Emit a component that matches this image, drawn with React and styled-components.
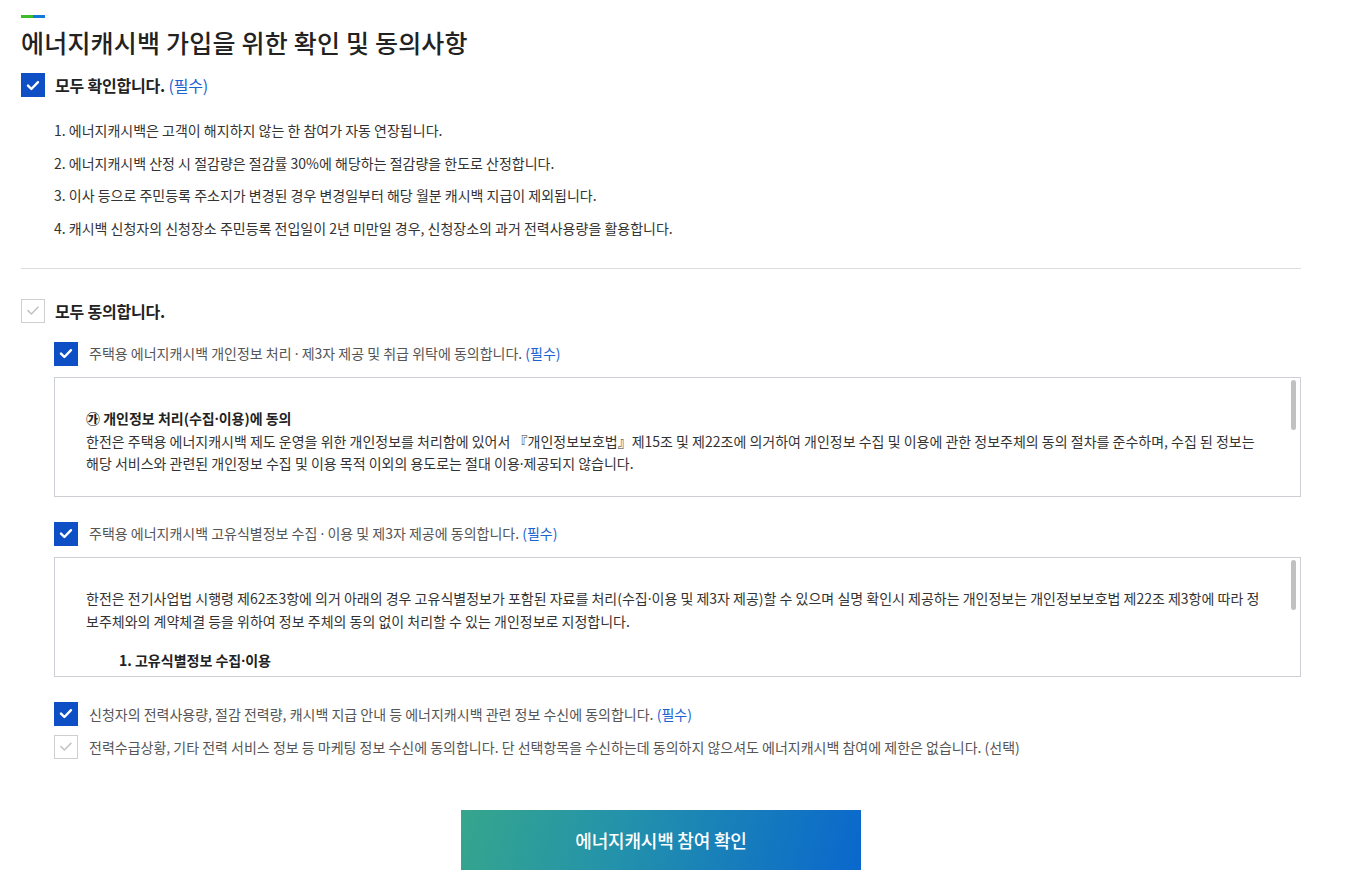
import React from 'react';
import styled, { createGlobalStyle } from 'styled-components';

const GlobalStyle = createGlobalStyle`
  body {
    margin: 0;
    background: #fff;
    font-family: "Noto Sans CJK KR", "Noto Sans", sans-serif;
    color: #333;
  }
`;

const Page = styled.div`
  width: 1280px;
  padding: 15px 0 17px 21px;
`;

const TitleBar = styled.div`
  display: flex;
  width: 24px;
  height: 3px;
  span:first-child { flex: 1; background: #3dbb2a; }
  span:last-child { flex: 1; background: #1379d8; }
`;

const Title = styled.h2`
  margin: 4px 0 0;
  font-size: 25px;
  line-height: 40px;
  font-weight: 500;
  color: #222;
  letter-spacing: 0.2px;
`;

const CheckRow = styled.label`
  display: flex;
  align-items: center;
  gap: ${p => (p.$sub ? '11px' : '10px')};
  margin: ${p => p.$margin || '0'};
  padding-left: ${p => (p.$sub ? '33px' : '0')};
`;

const Box = styled.span`
  flex: none;
  display: flex;
  align-items: center;
  justify-content: center;
  width: 24px;
  height: 24px;
  box-sizing: border-box;
  background: ${p => (p.$on ? '#0f4fc6' : '#fff')};
  border: 1px solid ${p => (p.$on ? '#0f4fc6' : '#cfcfcf')};
`;

const MainLabel = styled.span`
  font-size: 16px;
  line-height: 24px;
  font-weight: 700;
  color: #222;
  letter-spacing: -0.2px;
`;

const SubLabel = styled.span`
  font-size: 14px;
  line-height: 22px;
  color: #555;
`;

const Required = styled.span`
  color: #1a63d0;
  font-weight: 400;
`;

const Dot = styled.span`
  font-family: "Noto Sans", sans-serif;
`;

const Notes = styled.ol`
  list-style: none;
  margin: 22px 0 0;
  padding: 0 0 0 33px;
  display: flex;
  flex-direction: column;
  gap: 10.5px;
  li {
    font-size: 14px;
    line-height: 22px;
    color: #333;
  }
`;

const Divider = styled.hr`
  margin: 29px 0 0;
  border: 0;
  border-top: 1px solid #ddd;
`;

const TermsBox = styled.div`
  position: relative;
  margin: 11px 0 0 33px;
  height: 120px;
  box-sizing: border-box;
  border: 1px solid #ccd0d4;
  overflow: hidden;
`;

const TermsText = styled.div`
  padding: 29px 40px 0 31px;
  font-size: 14px;
  line-height: 22px;
  color: #333;
  p { margin: 0; }
  strong { font-weight: 700; color: #222; }
  .gap { height: 17px; }
  .indent { padding-left: 33px; }
`;

const Scrollbar = styled.div`
  position: absolute;
  top: 2px;
  right: 4px;
  width: 5px;
  height: 50px;
  border-radius: 3px;
  background: #c1c1c1;
`;

const ButtonWrap = styled.div`
  display: flex;
  justify-content: center;
  margin-top: 51px;
`;

const Submit = styled.button`
  width: 400px;
  height: 60px;
  border: 0;
  color: #fff;
  font-family: inherit;
  font-size: 18px;
  font-weight: 500;
  letter-spacing: -0.2px;
  background: linear-gradient(105deg, #36a68d 0%, #2392ab 40%, #0a67cd 100%);
  cursor: pointer;
`;

function Check({ on }) {
  return (
    <Box $on={on}>
      <svg width="14" height="11" viewBox="0 0 14 11" fill="none">
        <path
          d="M2 5.6 L5.4 9 L12 2.2"
          stroke={on ? '#fff' : '#c4c4c4'}
          strokeWidth={on ? 2.4 : 1.6}
          strokeLinecap="round"
          strokeLinejoin="round"
        />
      </svg>
    </Box>
  );
}

const notes = [
  '1. 에너지캐시백은 고객이 해지하지 않는 한 참여가 자동 연장됩니다.',
  '2. 에너지캐시백 산정 시 절감량은 절감률 30%에 해당하는 절감량을 한도로 산정합니다.',
  '3. 이사 등으로 주민등록 주소지가 변경된 경우 변경일부터 해당 월분 캐시백 지급이 제외됩니다.',
  '4. 캐시백 신청자의 신청장소 주민등록 전입일이 2년 미만일 경우, 신청장소의 과거 전력사용량을 활용합니다.',
];

export default function App() {
  return (
    <Page>
      <GlobalStyle />
      <TitleBar><span /><span /></TitleBar>
      <Title>에너지캐시백 가입을 위한 확인 및 동의사항</Title>

      <CheckRow $margin="11px 0 0">
        <Check on />
        <MainLabel>모두 확인합니다. <Required>(필수)</Required></MainLabel>
      </CheckRow>
      <Notes>
        {notes.map(n => <li key={n}>{n}</li>)}
      </Notes>

      <Divider />

      <CheckRow $margin="30px 0 0">
        <Check />
        <MainLabel>모두 동의합니다.</MainLabel>
      </CheckRow>

      <CheckRow $sub $margin="19px 0 0">
        <Check on />
        <SubLabel>주택용 에너지캐시백 개인정보 처리 <Dot>·</Dot> 제3자 제공 및 취급 위탁에 동의합니다. <Required>(필수)</Required></SubLabel>
      </CheckRow>
      <TermsBox>
        <TermsText>
          <p><strong>㉮ 개인정보 처리(수집<Dot>·</Dot>이용)에 동의</strong></p>
          <p>
            한전은 주택용 에너지캐시백 제도 운영을 위한 개인정보를 처리함에 있어서 『개인정보보호법』제15조 및 제22조에 의거하여 개인정보 수집 및 이용에 관한 정보주체의 동의 절차를 준수하며, 수집 된 정보는
            <br />
            해당 서비스와 관련된 개인정보 수집 및 이용 목적 이외의 용도로는 절대 이용<Dot>·</Dot>제공되지 않습니다.
          </p>
          <div className="gap" />
          <p className="indent">- 수집<Dot>·</Dot>이용 목적 : 에너지캐시백 참여 신청</p>
        </TermsText>
        <Scrollbar />
      </TermsBox>

      <CheckRow $sub $margin="25px 0 0">
        <Check on />
        <SubLabel>주택용 에너지캐시백 고유식별정보 수집 <Dot>·</Dot> 이용 및 제3자 제공에 동의합니다. <Required>(필수)</Required></SubLabel>
      </CheckRow>
      <TermsBox>
        <TermsText>
          <p>
            한전은 전기사업법 시행령 제62조3항에 의거 아래의 경우 고유식별정보가 포함된 자료를 처리(수집<Dot>·</Dot>이용 및 제3자 제공)할 수 있으며 실명 확인시 제공하는 개인정보는 개인정보보호법 제22조 제3항에 따라 정
            <br />
            보주체와의 계약체결 등을 위하여 정보 주체의 동의 없이 처리할 수 있는 개인정보로 지정합니다.
          </p>
          <div className="gap" />
          <p className="indent"><strong>1. 고유식별정보 수집<Dot>·</Dot>이용</strong></p>
          <p className="indent">- 수집<Dot>·</Dot>이용 목적 : 에너지캐시백 참여 신청 시 본인 확인</p>
        </TermsText>
        <Scrollbar />
      </TermsBox>

      <CheckRow $sub $margin="25px 0 0">
        <Check on />
        <SubLabel>신청자의 전력사용량, 절감 전력량, 캐시백 지급 안내 등 에너지캐시백 관련 정보 수신에 동의합니다. <Required>(필수)</Required></SubLabel>
      </CheckRow>
      <CheckRow $sub $margin="9px 0 0">
        <Check />
        <SubLabel>전력수급상황, 기타 전력 서비스 정보 등 마케팅 정보 수신에 동의합니다. 단 선택항목을 수신하는데 동의하지 않으셔도 에너지캐시백 참여에 제한은 없습니다. (선택)</SubLabel>
      </CheckRow>

      <ButtonWrap>
        <Submit>에너지캐시백 참여 확인</Submit>
      </ButtonWrap>
    </Page>
  );
}
